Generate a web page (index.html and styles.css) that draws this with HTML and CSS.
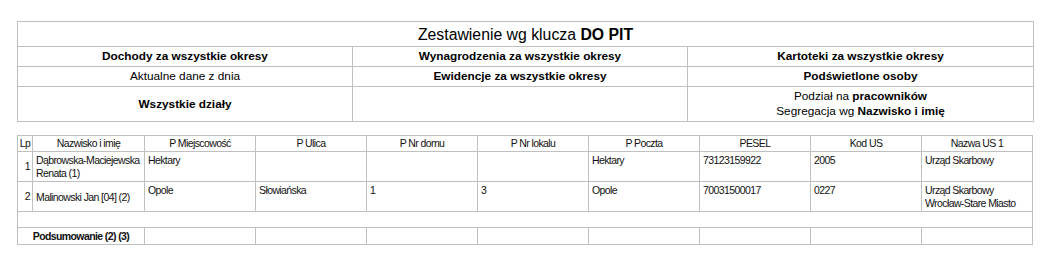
FILE: index.html
```html
<!DOCTYPE html>
<html lang="pl">
<head>
<meta charset="utf-8">
<title>Zestawienie</title>
<link rel="stylesheet" href="styles.css">
</head>
<body>
<div class="page">
  <table class="summary">
    <colgroup><col class="c1"><col class="c2"><col class="c3"></colgroup>
    <tr><td colspan="3" class="title">Zestawienie wg klucza <b>DO PIT</b></td></tr>
    <tr><td><b>Dochody za wszystkie okresy</b></td><td><b>Wynagrodzenia za wszystkie okresy</b></td><td><b>Kartoteki za wszystkie okresy</b></td></tr>
    <tr><td>Aktualne dane z dnia</td><td><b>Ewidencje za wszystkie okresy</b></td><td><b>Podświetlone osoby</b></td></tr>
    <tr><td><b>Wszystkie działy</b></td><td></td><td>Podział na <b>pracowników</b><br>Segregacja wg <b>Nazwisko i imię</b></td></tr>
  </table>

  <table class="data">
    <colgroup>
      <col class="lp"><col class="name"><col class="w"><col class="w"><col class="w"><col class="w"><col class="w"><col class="w"><col class="w"><col class="w">
    </colgroup>
    <tr class="head">
      <th>Lp</th><th>Nazwisko i imię</th><th>P Miejscowość</th><th>P Ulica</th><th>P Nr domu</th><th>P Nr lokalu</th><th>P Poczta</th><th>PESEL</th><th>Kod US</th><th>Nazwa US 1</th>
    </tr>
    <tr>
      <td class="num">1</td><td class="mid">Dąbrowska-Maciejewska Renata (1)</td><td>Hektary</td><td></td><td></td><td></td><td>Hektary</td><td>73123159922</td><td>2005</td><td>Urząd Skarbowy</td>
    </tr>
    <tr>
      <td class="num">2</td><td class="mid">Malinowski Jan [04] (2)</td><td>Opole</td><td>Słowiańska</td><td>1</td><td>3</td><td>Opole</td><td>70031500017</td><td>0227</td><td>Urząd Skarbowy<br>Wrocław-Stare Miasto</td>
    </tr>
    <tr class="empty"><td colspan="10"></td></tr>
    <tr class="total">
      <td colspan="2" class="sum">Podsumowanie (2) (3)</td><td></td><td></td><td></td><td></td><td></td><td></td><td></td><td></td>
    </tr>
  </table>
</div>
</body>
</html>
```
FILE: styles.css
```css
html, body {
  margin: 0;
  padding: 0;
  background: #fff;
}
.page {
  padding: 21px 0 0 17px;
  font-family: "Liberation Sans", Arial, sans-serif;
  color: #000;
}
table {
  border-collapse: collapse;
  table-layout: fixed;
}
td, th {
  border: 1px solid #c0c0c0;
}
.summary {
  width: 1016px;
  font-size: 11.8px;
  line-height: 15px;
}
.summary .c1 { width: 335px; }
.summary .c2 { width: 335px; }
.summary .c3 { width: 346px; }
.summary td {
  text-align: center;
  vertical-align: middle;
  padding: 2px 4px 2px;
  height: 15px;
}
.summary td.title {
  font-size: 15.8px;
  line-height: 19px;
  padding: 3px 4px 2px;
}
.data {
  margin-top: 13px;
  width: 1016px;
  font-size: 10.5px;
  letter-spacing: -0.6px;
  line-height: 13px;
  color: #111;
}
.data .lp { width: 15px; }
.data .name { width: 112px; }
.data .w { width: 111px; }
.data th {
  font-weight: normal;
  text-align: center;
  padding: 1px 1px 1px;
  height: 13px;
}
.data td {
  vertical-align: top;
  text-align: left;
  padding: 2px 2px 1px 3px;
  height: 26px;
}
.data td.num {
  text-align: right;
  vertical-align: middle;
  padding: 0 2px 0 0;
}
.data td.mid {
  vertical-align: middle;
}
.data tr.empty td {
  height: 15px;
  padding: 0;
}
.data tr.total td {
  height: 13px;
  padding: 2px 2px 1px;
}
.data td.sum {
  text-align: center;
  font-weight: bold;
}
```
